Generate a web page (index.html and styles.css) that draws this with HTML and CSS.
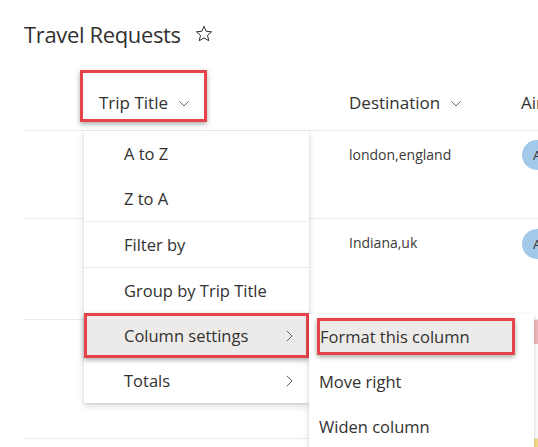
FILE: index.html
```html
<!DOCTYPE html>
<html>
<head>
<meta charset="utf-8">
<link rel="stylesheet" href="styles.css">
</head>
<body>
<div class="page">
  <div class="title">
    <span>Travel Requests</span>
    <svg class="star" width="18" height="18" viewBox="0 0 18 18"><path d="M9 1.2 L11.2 6.3 L16.6 6.8 L12.5 10.4 L13.8 15.8 L9 12.9 L4.2 15.8 L5.5 10.4 L1.4 6.8 L6.8 6.3 Z" fill="none" stroke="#323130" stroke-width="1" stroke-linejoin="round"/></svg>
  </div>
  <div class="list">
    <div class="row head">
      <div class="cell"></div>
      <div class="cell"><span class="hcell annot">Trip Title <svg class="chev" width="10" height="6" viewBox="0 0 10 6"><path d="M0.5 0.5 L5 5 L9.5 0.5" fill="none" stroke="#605e5c" stroke-width="1"/></svg></span></div>
      <div class="cell"><span class="hcell">Destination <svg class="chev" width="10" height="6" viewBox="0 0 10 6"><path d="M0.5 0.5 L5 5 L9.5 0.5" fill="none" stroke="#605e5c" stroke-width="1"/></svg></span></div>
      <div class="cell"><span class="hcell">Airline</span></div>
    </div>
    <div class="row r1">
      <div class="cell"></div>
      <div class="cell"></div>
      <div class="cell data">london,england</div>
      <div class="cell"><span class="avatar">A</span></div>
    </div>
    <div class="row r2">
      <div class="cell"></div>
      <div class="cell"></div>
      <div class="cell data">Indiana,uk</div>
      <div class="cell"><span class="avatar">A</span></div>
    </div>
    <div class="row r3">
      <div class="cell"></div>
      <div class="cell"></div>
      <div class="cell"></div>
      <div class="cell"><span class="pill pink"></span></div>
    </div>
    <div class="row r4">
      <div class="cell"></div>
      <div class="cell"></div>
      <div class="cell"></div>
      <div class="cell"><span class="pill yellow"></span></div>
    </div>
  </div>

  <div class="menu main">
    <div class="item">A to Z</div>
    <div class="item">Z to A</div>
    <div class="sep"></div>
    <div class="item">Filter by</div>
    <div class="sep"></div>
    <div class="item">Group by Trip Title</div>
    <div class="item hl annot">Column settings <svg class="arrow" width="7" height="12" viewBox="0 0 7 12"><path d="M0.8 0.8 L6 6 L0.8 11.2" fill="none" stroke="#605e5c" stroke-width="1"/></svg></div>
    <div class="item">Totals <svg class="arrow" width="7" height="12" viewBox="0 0 7 12"><path d="M0.8 0.8 L6 6 L0.8 11.2" fill="none" stroke="#605e5c" stroke-width="1"/></svg></div>
  </div>

  <div class="menu sub">
    <div class="item boxed"><span class="box annot">Format this column</span></div>
    <div class="item">Move right</div>
    <div class="item">Widen column</div>
  </div>
</div>
</body>
</html>
```

FILE: styles.css
```css
* { box-sizing: border-box; }
html, body {
  margin: 0;
  padding: 0;
  background: #ffffff;
  overflow: hidden;
}
body {
  font-family: "Open Sans", "Noto Sans", sans-serif;
  color: #323130;
}
.page {
  position: relative;
  width: 538px;
  height: 447px;
  overflow: hidden;
}
.title {
  display: flex;
  align-items: center;
  gap: 14px;
  padding: 18px 0 0 24px;
  height: 50px;
  font-size: 22px;
  line-height: 32px;
  letter-spacing: -0.35px;
}
.star { margin-top: -1px; }

.list {
  margin-left: 24px;
}
.row {
  display: grid;
  grid-template-columns: 56px 253px 172px 1fr;
  border-bottom: 1px solid #edebe9;
  white-space: nowrap;
}
.row.head {
  height: 81px;
  padding-top: 20px;
}
.hcell {
  display: inline-flex;
  align-items: flex-start;
  gap: 11px;
  height: 52px;
  border: 3px solid transparent;
  padding: 18px 0 0 13px;
  font-size: 17px;
  line-height: 24px;
  font-weight: 500;
}
.hcell .chev { margin-top: 10px; }
.hcell.annot {
  width: 127px;
  padding-left: 16px;
}
.annot {
  border: 3px solid #e5444a !important;
  box-shadow: 0 2px 5px rgba(0, 0, 0, 0.35);
}
.r1 { height: 88px; }
.r2 { height: 101px; }
.r3 { height: 119px; }
.r4 { height: 40px; }
.data {
  padding: 14px 0 0 16px;
  font-size: 14px;
  line-height: 20px;
  color: #3b3a39;
}
.avatar {
  display: flex;
  align-items: center;
  justify-content: center;
  width: 30px;
  height: 30px;
  margin: 9px 0 0 17px;
  border-radius: 50%;
  background: #a2c8ea;
  font-size: 13px;
  color: #323130;
}
.r2 .avatar { margin-top: 10px; }
.pill {
  display: block;
  margin-left: 17px;
  width: 40px;
  border-radius: 2px;
}
.pink { height: 24px; margin-top: 0; background: #f1b8bc; }
.yellow { height: 20px; margin-top: 0; background: #f9dd84; }

.menu {
  position: absolute;
  background: #ffffff;
  width: 225px;
  box-shadow: 0 3px 7px rgba(0, 0, 0, 0.14), 0 0.6px 2px rgba(0, 0, 0, 0.1);
  font-size: 16.5px;
  color: #323130;
}
.menu.main {
  left: 84px;
  top: 131px;
}
.menu.sub {
  left: 309px;
  top: 314px;
  height: 200px;
}
.item {
  display: flex;
  align-items: center;
  height: 45px;
  padding: 0 16px 0 40px;
  white-space: nowrap;
}
.sep {
  height: 1px;
  background: #edebe9;
}
.item .arrow {
  margin-left: auto;
  margin-right: 0;
}
.item.hl {
  background: #edebe9;
  padding-left: 37px;
  padding-right: 13px;
}
.sub .item {
  padding-left: 10px;
}
.sub .item.boxed {
  padding: 4px 19px 4px 8px;
}
.box {
  display: flex;
  align-items: center;
  width: 198px;
  height: 37px;
  background: #edebe9;
  padding-left: 0;
}
```
